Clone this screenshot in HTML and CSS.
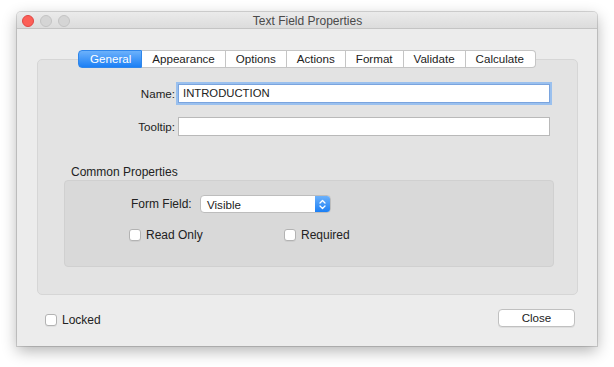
FILE: index.html
```html
<!DOCTYPE html>
<html>
<head>
<meta charset="utf-8">
<title>Text Field Properties</title>
<link rel="stylesheet" href="styles.css">
</head>
<body>
<div class="window">
  <div class="titlebar">
    <div class="lights">
      <span class="light red"></span>
      <span class="light gray"></span>
      <span class="light gray"></span>
    </div>
    <div class="title">Text Field Properties</div>
  </div>
  <div class="content">
    <div class="tabs">
      <div class="tab active">General</div>
      <div class="tab">Appearance</div>
      <div class="tab">Options</div>
      <div class="tab">Actions</div>
      <div class="tab">Format</div>
      <div class="tab">Validate</div>
      <div class="tab">Calculate</div>
    </div>
    <div class="panel">
      <div class="fields">
        <label class="lbl">Name:</label>
        <div class="field focused">INTRODUCTION</div>
        <label class="lbl">Tooltip:</label>
        <div class="field"></div>
      </div>
      <div class="group-title">Common Properties</div>
      <div class="group">
        <div class="form-row">
          <span class="form-label">Form Field:</span>
          <div class="popup">
            <span class="popup-text">Visible</span>
            <span class="popup-arrows">
              <svg width="7" height="11" viewBox="0 0 7 11"><path d="M1 4 L3.5 1.5 L6 4 M1 7 L3.5 9.5 L6 7" fill="none" stroke="#fff" stroke-width="1.3" stroke-linecap="round" stroke-linejoin="round"/></svg>
            </span>
          </div>
        </div>
        <div class="check-row">
          <div class="check first"><span class="box"></span><span>Read Only</span></div>
          <div class="check"><span class="box"></span><span>Required</span></div>
        </div>
      </div>
    </div>
    <div class="footer">
      <div class="check locked"><span class="box"></span><span>Locked</span></div>
      <div class="button">Close</div>
    </div>
  </div>
</div>
</body>
</html>
```
FILE: styles.css
```css
* { box-sizing: border-box; }
html, body { margin: 0; padding: 0; background: #ffffff; }
body {
  font-family: "Liberation Sans", Arial, sans-serif;
  font-size: 11.6px;
  color: #222;
  padding-bottom: 20px;
}
.window {
  margin: 12px 0 0 17px;
  width: 580px;
  height: 334px;
  background: #ececec;
  border-radius: 4px 4px 0 0;
  box-shadow: 0 0 0 1px rgba(0,0,0,0.14), 0 5px 15px rgba(0,0,0,0.3);
  overflow: hidden;
}
.titlebar {
  height: 17px;
  background: linear-gradient(#ebebeb, #dcdcdc);
  border-bottom: 1px solid #c4c4c4;
  display: flex;
  align-items: center;
}
.lights {
  display: flex;
  gap: 6px;
  padding-left: 5px;
  padding-top: 1px;
}
.light {
  width: 12px;
  height: 12px;
  border-radius: 50%;
}
.light.red { background: #fc5f57; border: 1px solid #df4744; }
.light.gray { background: #d5d5d5; border: 1px solid #c3c3c3; }
.title {
  flex: 1;
  text-align: center;
  color: #4a4a4a;
  font-size: 12px;
  margin-left: -52px;
  padding-top: 1px;
}
.content {
  padding-top: 21px;
}
.tabs {
  display: flex;
  justify-content: center;
  position: relative;
  z-index: 1;
  height: 18px;
}
.tab {
  background: #fff;
  border: 1px solid #c5c5c5;
  border-left: none;
  height: 18px;
  line-height: 16px;
  padding: 0 10px;
  font-size: 11.6px;
  color: #222;
}
.tab:first-child { border-left: 1px solid #c5c5c5; border-radius: 4px 0 0 4px; }
.tab:last-child { border-radius: 0 4px 4px 0; padding-right: 11px; }
.tab.active {
  background: linear-gradient(#6cb1fb, #1b7ff5);
  border-color: #2f86ea;
  color: #fff;
  padding: 0 10px 0 11px;
}
.panel {
  margin: -9px 19px 0 20px;
  height: 236px;
  background: #e3e3e3;
  border: 1px solid #d6d6d6;
  border-radius: 5px;
  padding: 24px 23px 0 26px;
}
.fields {
  display: grid;
  grid-template-columns: 111px 372px;
  column-gap: 3px;
  row-gap: 14px;
  align-items: center;
}
.lbl { text-align: right; }
.field {
  height: 19px;
  background: #fff;
  border: 1px solid #b9b9b9;
  padding: 0 4px;
  line-height: 17px;
  font-size: 11.3px;
}
.field.focused {
  border-color: #7aa4de;
  box-shadow: 0 0 0 2px #9ac0ee;
}
.group-title {
  margin-top: 29px;
  height: 15px;
  line-height: 14px;
  padding-left: 7px;
  font-size: 12px;
}
.group {
  width: 490px;
  height: 87px;
  background: #d9d9d9;
  border: 1px solid #d0d0d0;
  border-radius: 4px;
  padding: 14px 0 0 64px;
}
.form-row {
  display: flex;
  align-items: center;
  height: 18px;
}
.form-label { padding-left: 2px; width: 71px; font-size: 12px; }
.popup {
  width: 131px;
  height: 18px;
  background: #fff;
  border: 1px solid #bdbdbd;
  border-radius: 4px;
  display: flex;
  align-items: center;
  overflow: hidden;
}
.popup-text { flex: 1; padding-left: 6px; }
.popup-arrows {
  width: 15px;
  height: 100%;
  background: linear-gradient(#6cb1fb, #1b7ff5);
  display: flex;
  align-items: center;
  justify-content: center;
}
.check-row {
  display: flex;
  margin-top: 15px;
}
.check {
  display: flex;
  align-items: center;
  gap: 5px;
  font-size: 12px;
}
.check.first { width: 155px; }
.box {
  width: 12px;
  height: 12px;
  background: #fff;
  border: 1px solid #b3b3b3;
  border-radius: 3px;
  box-shadow: 0 1px 0 rgba(0,0,0,0.05);
}
.footer {
  display: flex;
  justify-content: space-between;
  align-items: center;
  margin-top: 14px;
  padding: 0 22px 0 28px;
}
.locked { padding-top: 3px; }
.button {
  width: 77px;
  height: 18px;
  background: #fff;
  border: 1px solid #c0c0c0;
  border-radius: 4px;
  text-align: center;
  line-height: 16px;
  font-size: 11.6px;
  box-shadow: 0 1px 0 rgba(0,0,0,0.06);
}
```
